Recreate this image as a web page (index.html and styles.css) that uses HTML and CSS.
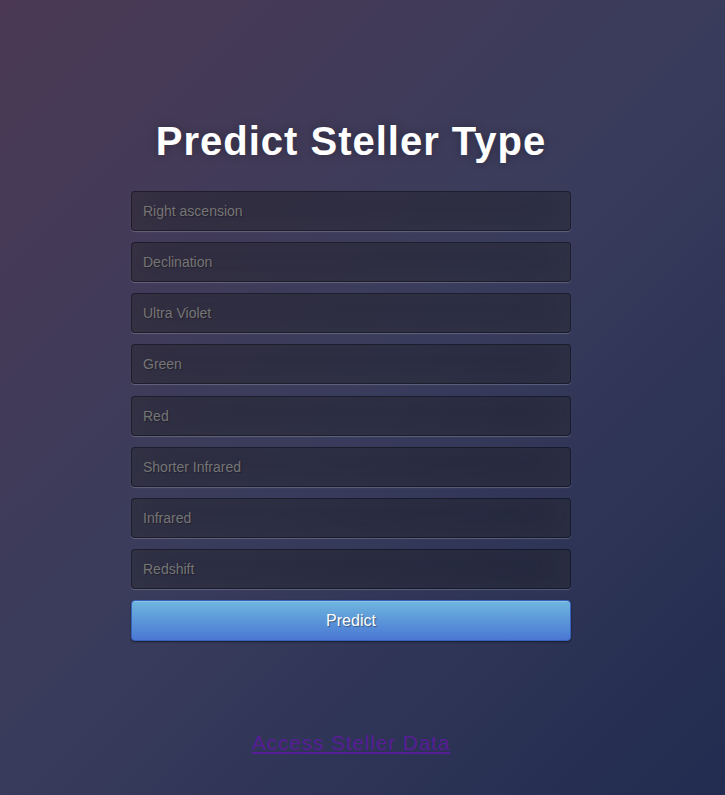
FILE: index.html
```html
<!DOCTYPE html>
<html lang="en">
<head>
<meta charset="utf-8">
<title>Predict Steller Type</title>
<link rel="stylesheet" href="styles.css">
</head>
<body>
<div class="login">
  <h1 class="title">Predict Steller Type</h1>
  <form class="form">
    <input class="field" type="text" placeholder="Right ascension">
    <input class="field" type="text" placeholder="Declination">
    <input class="field" type="text" placeholder="Ultra Violet">
    <input class="field" type="text" placeholder="Green">
    <input class="field" type="text" placeholder="Red">
    <input class="field" type="text" placeholder="Shorter Infrared">
    <input class="field" type="text" placeholder="Infrared">
    <input class="field" type="text" placeholder="Redshift">
    <button class="btn" type="button">Predict</button>
  </form>
  <div class="footer">
    <a class="data-link" href="#">Access Steller Data</a>
  </div>
</div>
</body>
</html>
```

FILE: styles.css
```css
html {
  width: 100%;
  height: 100%;
  overflow: hidden;
}

body {
  box-sizing: border-box;
  margin: 0;
  padding-right: 23px;
  width: 100%;
  height: 100%;
  font-family: "Liberation Sans", Arial, sans-serif;
  background: linear-gradient(135deg, #4b3954 0%, #3a3c5c 48%, #212c50 100%);
}

.login {
  width: 440px;
  margin: 0 auto;
  padding-top: 117px;
}

.title {
  margin: 0 0 26px;
  font-size: 40px;
  line-height: 48px;
  font-weight: bold;
  color: #fff;
  text-align: center;
  letter-spacing: 1px;
  text-shadow: 0 0 10px rgba(0, 0, 0, 0.3);
}

.form {
  display: flex;
  flex-direction: column;
  margin: 0;
}

.field {
  box-sizing: border-box;
  width: 100%;
  height: 40px;
  margin: 0 0 11.125px;
  padding: 0 11px;
  font-family: "Liberation Sans", Arial, sans-serif;
  font-size: 14px;
  color: #fff;
  background: rgba(0, 0, 0, 0.3);
  border: 1px solid rgba(0, 0, 0, 0.3);
  border-radius: 4px;
  outline: none;
  text-shadow: 1px 1px 1px rgba(0, 0, 0, 0.3);
  box-shadow: inset 0 -5px 45px rgba(100, 100, 100, 0.2), 0 1px 1px rgba(255, 255, 255, 0.2);
}

.field::placeholder {
  color: #757575;
}

.btn {
  box-sizing: border-box;
  width: 100%;
  height: 41px;
  margin: 0;
  padding: 0;
  font-family: "Liberation Sans", Arial, sans-serif;
  font-size: 16px;
  color: #fff;
  background-color: #4a77d4;
  background-image: linear-gradient(to bottom, #6eb6de, #4a77d4);
  border: 1px solid #3762bc;
  border-radius: 4px;
  text-shadow: 1px 1px 1px rgba(0, 0, 0, 0.4);
  box-shadow: inset 0 1px 0 rgba(255, 255, 255, 0.2), 0 1px 2px rgba(0, 0, 0, 0.5);
  cursor: pointer;
}

.footer {
  margin-top: 90px;
  text-align: center;
  line-height: 24px;
}

.data-link {
  font-size: 21px;
  letter-spacing: 0.8px;
  color: #571d97;
}
```
